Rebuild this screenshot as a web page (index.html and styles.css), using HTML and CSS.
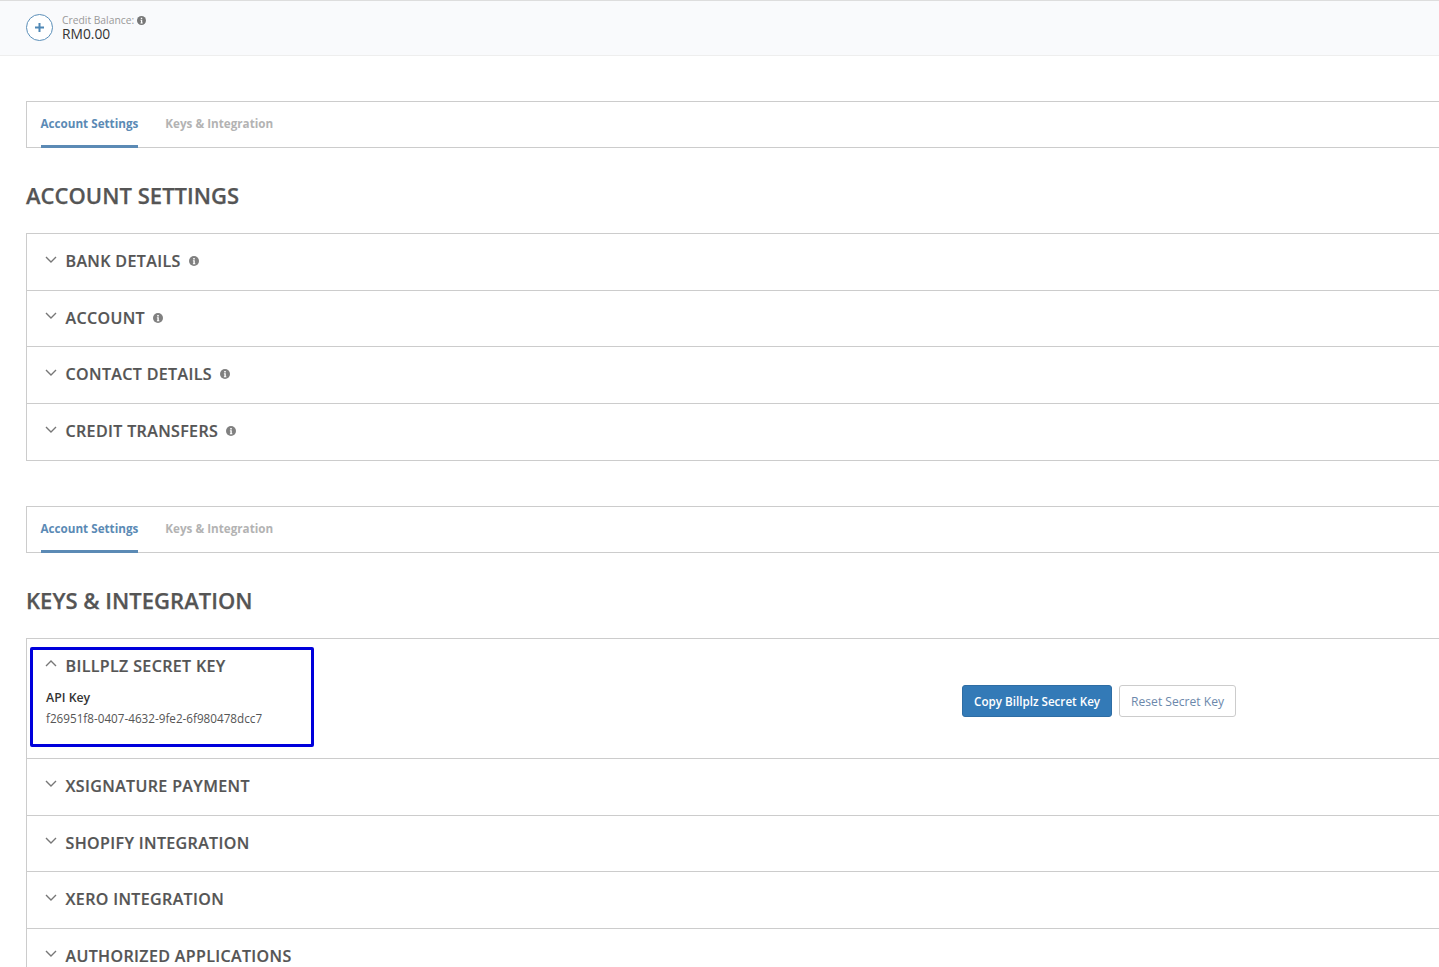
FILE: index.html
```html
<!DOCTYPE html>
<html lang="en">
<head>
<meta charset="utf-8">
<title>Settings</title>
<link rel="stylesheet" href="styles.css">
</head>
<body>
<header class="topbar">
  <div class="add-circle"><svg width="11" height="11" viewBox="0 0 11 11"><path d="M5.5 1v9M1 5.5h9" stroke="#4f87b5" stroke-width="2" fill="none"/></svg></div>
  <div class="balance">
    <div class="balance-label">Credit Balance: <svg class="info info-small" viewBox="0 0 10 10"><circle cx="5" cy="5" r="5" fill="#777"/><path d="M4.2 2h1.6v1.4H4.2zM3.9 4.2h1.9v3h.5v1H3.9v-1h.5v-2h-.5z" fill="#fff"/></svg></div>
    <div class="balance-value">RM0.00</div>
  </div>
</header>
<main class="content">
  <nav class="tabs">
    <a class="tab tab-active">Account Settings</a>
    <a class="tab">Keys &amp; Integration</a>
  </nav>
  <h1 class="page-title">ACCOUNT SETTINGS</h1>
  <section class="panel">
    <div class="row"><svg class="chev" viewBox="0 0 12 7"><path d="M1 1l5 5 5-5" fill="none" stroke="#777" stroke-width="1.4"/></svg><h2 class="row-title">BANK DETAILS</h2><svg class="info" viewBox="0 0 10 10"><circle cx="5" cy="5" r="5" fill="#808080"/><path d="M4.2 2h1.6v1.4H4.2zM3.9 4.2h1.9v3h.5v1H3.9v-1h.5v-2h-.5z" fill="#fff"/></svg></div>
    <div class="row"><svg class="chev" viewBox="0 0 12 7"><path d="M1 1l5 5 5-5" fill="none" stroke="#777" stroke-width="1.4"/></svg><h2 class="row-title">ACCOUNT</h2><svg class="info" viewBox="0 0 10 10"><circle cx="5" cy="5" r="5" fill="#808080"/><path d="M4.2 2h1.6v1.4H4.2zM3.9 4.2h1.9v3h.5v1H3.9v-1h.5v-2h-.5z" fill="#fff"/></svg></div>
    <div class="row"><svg class="chev" viewBox="0 0 12 7"><path d="M1 1l5 5 5-5" fill="none" stroke="#777" stroke-width="1.4"/></svg><h2 class="row-title">CONTACT DETAILS</h2><svg class="info" viewBox="0 0 10 10"><circle cx="5" cy="5" r="5" fill="#808080"/><path d="M4.2 2h1.6v1.4H4.2zM3.9 4.2h1.9v3h.5v1H3.9v-1h.5v-2h-.5z" fill="#fff"/></svg></div>
    <div class="row row-last"><svg class="chev" viewBox="0 0 12 7"><path d="M1 1l5 5 5-5" fill="none" stroke="#777" stroke-width="1.4"/></svg><h2 class="row-title">CREDIT TRANSFERS</h2><svg class="info" viewBox="0 0 10 10"><circle cx="5" cy="5" r="5" fill="#808080"/><path d="M4.2 2h1.6v1.4H4.2zM3.9 4.2h1.9v3h.5v1H3.9v-1h.5v-2h-.5z" fill="#fff"/></svg></div>
  </section>

  <nav class="tabs">
    <a class="tab tab-active">Account Settings</a>
    <a class="tab">Keys &amp; Integration</a>
  </nav>
  <h1 class="page-title">KEYS &amp; INTEGRATION</h1>
  <section class="panel panel-keys">
    <div class="row row-open">
      <div class="open-left">
        <div class="open-head"><svg class="chev" viewBox="0 0 12 7"><path d="M1 6l5-5 5 5" fill="none" stroke="#777" stroke-width="1.4"/></svg><h2 class="row-title">BILLPLZ SECRET KEY</h2></div>
        <div class="key-label">API Key</div>
        <div class="key-value">f26951f8-0407-4632-9fe2-6f980478dcc7</div>
      </div>
      <div class="actions">
        <button class="btn btn-primary">Copy Billplz Secret Key</button>
        <button class="btn btn-outline">Reset Secret Key</button>
      </div>
    </div>
    <div class="row"><svg class="chev" viewBox="0 0 12 7"><path d="M1 1l5 5 5-5" fill="none" stroke="#777" stroke-width="1.4"/></svg><h2 class="row-title">XSIGNATURE PAYMENT</h2></div>
    <div class="row"><svg class="chev" viewBox="0 0 12 7"><path d="M1 1l5 5 5-5" fill="none" stroke="#777" stroke-width="1.4"/></svg><h2 class="row-title">SHOPIFY INTEGRATION</h2></div>
    <div class="row"><svg class="chev" viewBox="0 0 12 7"><path d="M1 1l5 5 5-5" fill="none" stroke="#777" stroke-width="1.4"/></svg><h2 class="row-title">XERO INTEGRATION</h2></div>
    <div class="row"><svg class="chev" viewBox="0 0 12 7"><path d="M1 1l5 5 5-5" fill="none" stroke="#777" stroke-width="1.4"/></svg><h2 class="row-title">AUTHORIZED APPLICATIONS</h2></div>
    <div class="highlight"></div>
  </section>
</main>
</body>
</html>
```

FILE: styles.css
```css
* { box-sizing: border-box; }
html, body { margin: 0; height: 967px; overflow: hidden; }
body { background: #fff; font-family: "Open Sans", sans-serif; color: #555; width: 1439px; }

.topbar {
  height: 56px;
  background: #f9fafc;
  border-top: 1px solid #ddd;
  border-bottom: 1px solid #eee;
  display: flex;
  align-items: center;
  padding: 0 0 2px 26px;
  gap: 9px;
}
.add-circle {
  width: 27px; height: 27px;
  border: 1px solid #5b8fb9;
  border-radius: 50%;
  background: #fff;
  display: flex; align-items: center; justify-content: center;
}
.balance { padding-top: 1px; }
.balance-label { font-size: 10.3px; line-height: 12px; color: #999; display: flex; align-items: center; gap: 3px; }
.balance-value { font-size: 13.8px; line-height: 15px; color: #333; }
.info { width: 10px; height: 10px; flex: none; }
.info-small { width: 9px; height: 9px; }

.content { padding-left: 26px; width: 1500px; }
.tabs {
  margin-top: 45px;
  height: 47px;
  border: 1px solid #ccc;
  display: flex;
  padding-left: 13.5px;
  gap: 27px;
}
.tab {
  font-size: 11.68px;
  font-weight: 700;
  color: #b3b3b3;
  line-height: 43px;
  height: 46px;
}
.tab-active { color: #5b8ab5; border-bottom: 3px solid #5b8ab5; }

.page-title {
  margin: 0;
  height: 85px;
  padding-top: 31px;
  font-size: 22px;
  line-height: 32px;
  font-weight: 600;
  color: #555;
  letter-spacing: .03px;
  -webkit-text-stroke: .25px #555;
}
.panel { position: relative; border: 1px solid #ccc; }
.panel-keys { border-bottom: 0; }
.row {
  height: 56.67px;
  display: flex;
  align-items: center;
  padding: 0 0 1.6px 18px;
  border-bottom: 1px solid #ccc;
}
.row-last { height: 55.67px; border-bottom: 0; }
.chev { width: 12px; height: 7px; flex: none; margin: -4px 9px 0 -.5px; }
.row-title {
  margin: 0 8px 0 0;
  font-size: 16px;
  line-height: 22px;
  font-weight: 600;
  color: #555;
  letter-spacing: .37px;
  -webkit-text-stroke: .2px #555;
}
.row-open { height: 120.33px; align-items: flex-start; position: relative; }
.open-head { display: flex; align-items: center; height: 54px; }
.key-label { font-size: 12.3px; line-height: 18px; font-weight: 600; color: #333; margin: -4px 0 0 1px; }
.key-value { font-size: 11.7px; line-height: 18px; color: #555; margin: 2px 0 0 1px; }
.actions {
  position: absolute;
  left: 935px;
  top: 46px;
  display: flex;
  gap: 7px;
}
.btn {
  font-family: inherit;
  height: 32px;
  border-radius: 3px;
  padding: 1px 11px 0;
  line-height: 30px;
}
.btn-primary { background: #337ab7; color: #fff; border: 1px solid #2e6da4; font-weight: 600; font-size: 11.65px; }
.btn-outline { background: #fff; color: #6c88ab; border: 1px solid #ccc; font-size: 12.1px; }
.highlight {
  position: absolute;
  left: 3px;
  top: 8px;
  width: 284px;
  height: 100px;
  border: 3px solid #0000dc;
  border-radius: 2px;
  pointer-events: none;
}
```
